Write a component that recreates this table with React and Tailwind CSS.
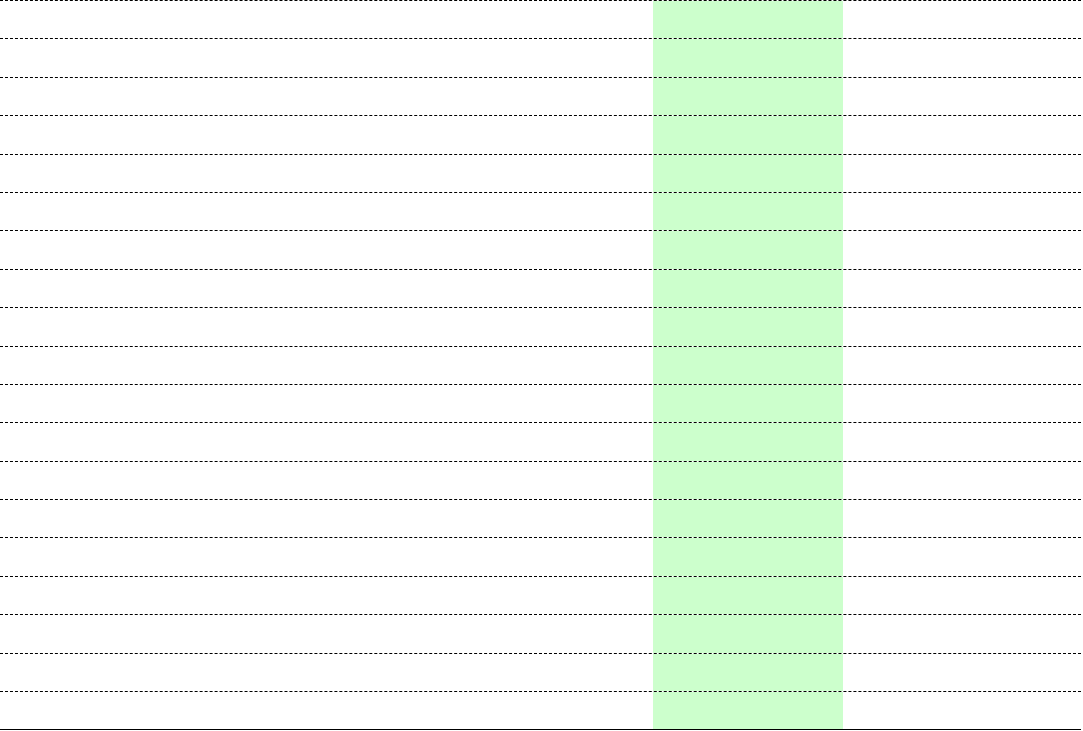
const rows = Array.from({ length: 19 }, (_, i) => i);

const App = () => {
  return (
    <div className="h-[731px] w-full overflow-hidden bg-white">
      <div className="w-[1081px] border-b border-solid border-black">
        {rows.map((r) => (
          <div
            key={r}
            className="flex h-[38.4px] border-t border-dashed border-black"
          >
            <div className="w-[653px]" />
            <div className="w-[190px] bg-[#ccffcc]" />
            <div className="flex-1" />
          </div>
        ))}
      </div>
    </div>
  );
};

export default App;
